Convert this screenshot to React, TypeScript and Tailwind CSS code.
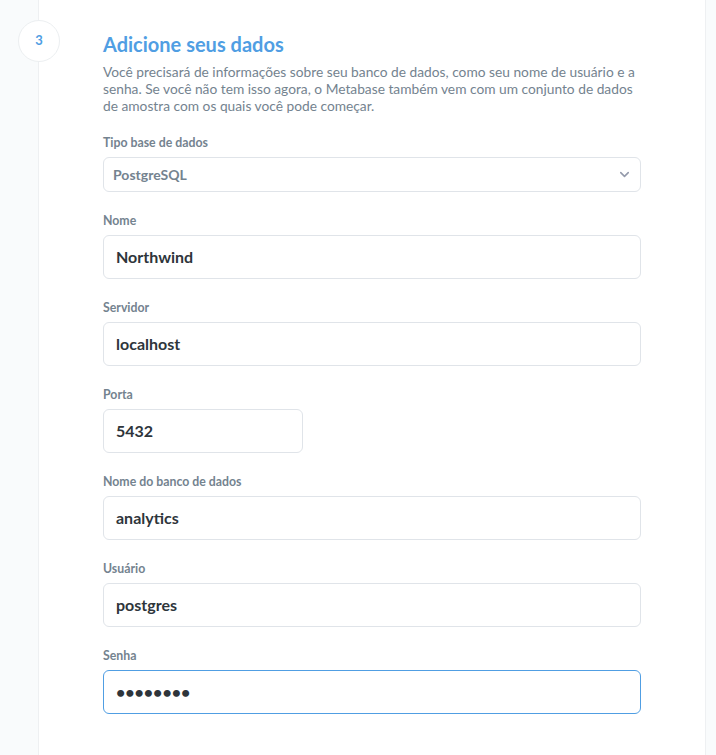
import { ChevronDown } from "lucide-react";

const fields = [
  { label: "Nome", value: "Northwind" },
  { label: "Servidor", value: "localhost" },
  { label: "Porta", value: "5432", short: true },
  { label: "Nome do banco de dados", value: "analytics" },
  { label: "Usuário", value: "postgres" },
  { label: "Senha", value: "••••••••", focused: true },
];

function Field({
  label,
  value,
  short,
  focused,
}: {
  label: string;
  value: string;
  short?: boolean;
  focused?: boolean;
}) {
  return (
    <div className="mb-[21px]">
      <div className="mb-[6px] text-[12.3px] font-bold leading-4 text-[#74838f]">{label}</div>
      <div
        className={`flex h-[44px] items-center rounded-md border bg-white px-3 text-[16px] font-bold text-[#2e353b] ${
          short ? "w-[200px]" : "w-full"
        } ${focused ? "border-[#509ee3]" : "border-[#e0e4e9]"}`}
      >
        {value}
      </div>
    </div>
  );
}

export default function App() {
  return (
    <div className="flex h-[755px] w-[716px] overflow-hidden bg-[#f9fbfc] font-['Lato','Noto_Sans',sans-serif]">
      <div className="w-[38px] shrink-0" />
      <div className="relative flex-1 border-x border-[#eef0f2] bg-white pl-[64px] pr-[64px] pt-[32px]">
        <div className="absolute -left-[21px] top-[20px] flex h-[42px] w-[42px] items-center justify-center rounded-full border border-[#eceff1] bg-white text-[13px] font-bold text-[#509ee3]">
          3
        </div>
        <h2 className="mb-[7px] text-[20px] font-bold leading-6 text-[#509ee3]">Adicione seus dados</h2>
        <p className="mb-[21px] text-[13.75px] leading-[17px] text-[#74838f]">
          Você precisará de informações sobre seu banco de dados, como seu nome de usuário e a senha. Se você não
          tem isso agora, o Metabase também vem com um conjunto de dados de amostra com os quais você pode começar.
        </p>
        <div className="mb-[21px]">
          <div className="mb-[6px] text-[12.3px] font-bold leading-4 text-[#74838f]">Tipo base de dados</div>
          <div className="flex h-[35px] w-full items-center justify-between rounded-md border border-[#e0e4e9] bg-white pl-[9px] pr-[8px] text-[14px] font-bold text-[#74838f]">
            <span>PostgreSQL</span>
            <ChevronDown size={15} strokeWidth={2.5} className="text-[#949aab]" />
          </div>
        </div>
        {fields.map((f) => (
          <Field key={f.label} {...f} />
        ))}
      </div>
      <div className="w-[10px] shrink-0" />
    </div>
  );
}
